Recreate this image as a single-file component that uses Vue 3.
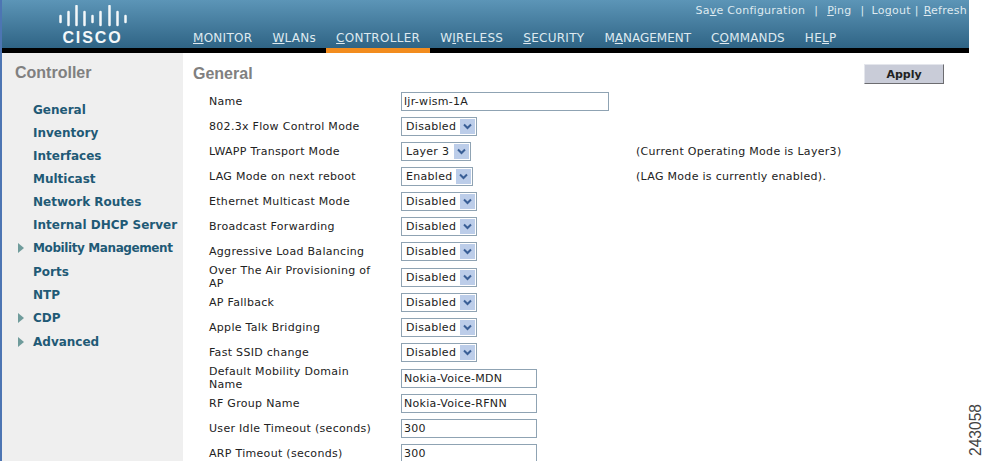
<script setup>
const tabs = [
  { a: '', u: 'M', b: 'ONITOR' }, { a: '', u: 'W', b: 'LANs' }, { a: '', u: 'C', b: 'ONTROLLER', cls: 'active' },
  { a: 'W', u: 'I', b: 'RELESS' }, { a: '', u: 'S', b: 'ECURITY' }, { a: 'M', u: 'A', b: 'NAGEMENT', cls: 'tight' },
  { a: 'C', u: 'O', b: 'MMANDS', cls: 'snug' }, { a: 'HE', u: 'L', b: 'P' },
]
const menu = [
  ['General'], ['Inventory'], ['Interfaces'], ['Multicast'], ['Network Routes'], ['Internal DHCP Server'],
  ['Mobility Management', true, true], ['Ports'], ['NTP'], ['CDP', true], ['Advanced', true],
]
const d = { type: 'select', value: 'Disabled', w: 76 }
const rows = [
  { label: 'Name', type: 'input', value: 'ljr-wism-1A', w: 208 },
  { label: '802.3x Flow Control Mode', ...d },
  { label: 'LWAPP Transport Mode', type: 'select', value: 'Layer 3', w: 70, note: '(Current Operating Mode is Layer3)' },
  { label: 'LAG Mode on next reboot', type: 'select', value: 'Enabled', w: 72, note: '(LAG Mode is currently enabled).' },
  { label: 'Ethernet Multicast Mode', ...d },
  { label: 'Broadcast Forwarding', ...d },
  { label: 'Aggressive Load Balancing', ...d },
  { label: 'Over The Air Provisioning of AP', ...d },
  { label: 'AP Fallback', ...d },
  { label: 'Apple Talk Bridging', ...d },
  { label: 'Fast SSID change', ...d },
  { label: 'Default Mobility Domain Name', type: 'input', value: 'Nokia-Voice-MDN', w: 136 },
  { label: 'RF Group Name', type: 'input', value: 'Nokia-Voice-RFNN', w: 136 },
  { label: 'User Idle Timeout (seconds)', type: 'input', value: '300', w: 136 },
  { label: 'ARP Timeout (seconds)', type: 'input', value: '300', w: 136 },
]
const bars = [
  [60, 16, 22], [68, 12, 25], [76, 6, 25], [84, 12, 25], [92, 16, 22],
  [100, 12, 25], [109, 6, 25], [117, 12, 25], [125, 16, 22],
]
</script>

<template>
  <div class="page">
    <div class="shell">
      <header class="top">
        <div class="logo">
          <svg class="bars" width="72" height="22" viewBox="56.5 5 72 22">
            <line v-for="b in bars" :key="b[0]" :x1="b[0]" :x2="b[0]" :y1="b[1]" :y2="b[2]" stroke="#f4f8fa" stroke-width="2.5" stroke-linecap="round" />
          </svg>
          <span class="cisco">CISCO</span>
        </div>
        <div class="topright">
          <div class="links">
            <a class="l1">Sa<u>v</u>e Configuration</a><i class="l2">|</i>
            <a class="l3"><u>P</u>ing</a><i class="l4">|</i>
            <a class="l5">Lo<u>g</u>out</a><i class="l6">|</i>
            <a class="l7"><u>R</u>efresh</a>
          </div>
          <nav class="nav">
            <a v-for="t in tabs" :key="t.b" class="tab" :class="t.cls">{{ t.a }}<u>{{ t.u }}</u>{{ t.b }}</a>
          </nav>
        </div>
      </header>
      <div class="body">
        <aside class="side">
          <h2 class="sidetitle">Controller</h2>
          <ul class="menu">
            <li v-for="m in menu" :key="m[0]" class="item" :class="{ tight: m[2], branch: m[1] }">
              <span class="caret"></span>{{ m[0] }}
            </li>
          </ul>
        </aside>
        <main class="main">
          <div class="titlebar">
            <h1 class="title">General</h1>
            <button class="apply" type="button">Apply</button>
          </div>
          <div class="form">
            <div v-for="r in rows" :key="r.label" class="row">
              <div class="label">{{ r.label }}</div>
              <div class="field">
                <div v-if="r.type === 'input'" class="input" :style="{ width: r.w + 'px' }">{{ r.value }}</div>
                <div v-else class="select" :style="{ width: r.w + 'px' }">
                  <span>{{ r.value }}</span>
                  <span class="btn">
                    <svg width="9" height="7" viewBox="0 0 9 7"><path d="M1 1.5 L4.5 5 L8 1.5" fill="none" stroke="#3a5f96" stroke-width="2" /></svg>
                  </span>
                </div>
              </div>
              <div class="note">{{ r.note }}</div>
            </div>
          </div>
        </main>
      </div>
    </div>
    <div class="figure">243058</div>
  </div>
</template>

<style>
html, body { margin: 0; background: #fff; overflow: hidden; }
</style>

<style scoped>
.page {
  width: 988px;
  height: 461px;
  overflow: hidden;
  position: relative;
  background: #fff;
  font-family: "DejaVu Sans", sans-serif;
  font-size: 11px;
}
.shell {
  width: 967px;
  height: 461px;
  border-left: 2px solid #4d75b3;
  display: flex;
  flex-direction: column;
}
.top {
  height: 48px;
  flex: none;
  display: flex;
  background: linear-gradient(#5c95b7, #2f6485);
  border-bottom: 5px solid #000;
  color: #dfeaf0;
}
.logo {
  width: 181px;
  flex: none;
  display: flex;
  flex-direction: column;
  align-items: center;
  padding-top: 5px;
  box-sizing: border-box;
}
.bars { display: block; }
.cisco {
  font-family: "Liberation Sans", sans-serif;
  font-weight: 700;
  font-size: 16px;
  line-height: 18px;
  letter-spacing: 1.9px;
  color: #f4f8fa;
  margin-top: 2px;
}
.topright { flex: 1; display: flex; flex-direction: column; justify-content: space-between; min-width: 0; }
.links {
  display: flex;
  height: 20px;
  align-items: center;
  justify-content: flex-end;
  padding-right: 2px;
  letter-spacing: 0.25px;
  white-space: nowrap;
}
.links i { font-style: normal; }
.l2 { margin-left: 9px; }
.l3 { margin-left: 9px; }
.l4 { margin-left: 9px; }
.l5 { margin-left: 7px; }
.l6 { margin-left: 4px; }
.l7 { margin-left: 5px; }
.nav { display: flex; height: 23px; }
.tab {
  position: relative;
  box-sizing: border-box;
  height: 23px;
  padding: 4px 10px 0;
  font-size: 12px;
  line-height: 19px;
  letter-spacing: 0.28px;
  white-space: nowrap;
}
.tab.tight { letter-spacing: 0; }
.tab.snug { letter-spacing: 0.15px; }
.tab.active::after {
  content: "";
  position: absolute;
  left: 0;
  right: 0;
  top: 23px;
  height: 5px;
  background: #f28c1e;
}
.body { flex: 1; display: flex; min-height: 0; }
.side {
  width: 181px;
  flex: none;
  background: #efefef;
  box-sizing: border-box;
  padding: 11px 0 0 13px;
}
.sidetitle {
  margin: 0 0 16px;
  font-family: "Liberation Sans", sans-serif;
  font-size: 16px;
  line-height: 18px;
  font-weight: 700;
  color: #808080;
}
.menu { list-style: none; margin: 0; padding: 0; }
.item {
  display: flex;
  align-items: center;
  height: 23px;
  font-size: 12px;
  font-weight: 700;
  color: #1f5a76;
  white-space: nowrap;
}
.item.branch { height: 23px; padding-bottom: 1px; }
.item.tight { letter-spacing: -0.4px; }
.caret {
  width: 0;
  height: 0;
  margin: 0 9px 0 3px;
  border-left: 6px solid transparent;
  border-top: 5px solid transparent;
  border-bottom: 5px solid transparent;
}
.branch .caret { border-left-color: #6f9b9b; }
.main { flex: 1; min-width: 0; padding: 0 25px 0 10px; }
.titlebar {
  display: flex;
  justify-content: space-between;
  align-items: flex-start;
  padding-top: 11px;
  height: 25px;
}
.title {
  margin: 1px 0 0;
  font-family: "Liberation Sans", sans-serif;
  font-size: 16px;
  line-height: 18px;
  font-weight: 700;
  color: #808080;
}
.apply {
  width: 80px;
  height: 20px;
  padding: 0;
  box-sizing: border-box;
  background: #c9ccd8;
  border: 1px solid;
  border-color: #e4e6ec #6c6c70 #6c6c70 #e4e6ec;
  font-family: "DejaVu Sans", sans-serif;
  font-size: 11px;
  font-weight: 700;
  color: #222;
}
.form { padding-left: 16px; }
.row {
  display: grid;
  grid-template-columns: 192px 235px 1fr;
  min-height: 25px;
  align-items: center;
  color: #222;
  letter-spacing: 0.3px;
}
.label { width: 168px; line-height: 13px; }
.field { display: flex; }
.input, .select {
  box-sizing: border-box;
  background: #fff;
  border: 1px solid #8fa3b3;
  display: flex;
  align-items: center;
  white-space: nowrap;
}
.input { height: 19px; padding-left: 2px; }
.select {
  height: 19px;
  padding: 0 1px 0 4px;
  justify-content: space-between;
}
.btn {
  width: 15px;
  height: 15px;
  background: #bccde9;
  display: flex;
  align-items: center;
  justify-content: center;
}
.note { white-space: nowrap; }
.figure {
  position: absolute;
  left: 968px;
  top: 404px;
  height: 52px;
  writing-mode: vertical-rl;
  transform: rotate(180deg);
  font-family: "Liberation Sans", sans-serif;
  font-size: 15.6px;
  color: #444;
  line-height: 16px;
  text-align: left;
}
</style>
